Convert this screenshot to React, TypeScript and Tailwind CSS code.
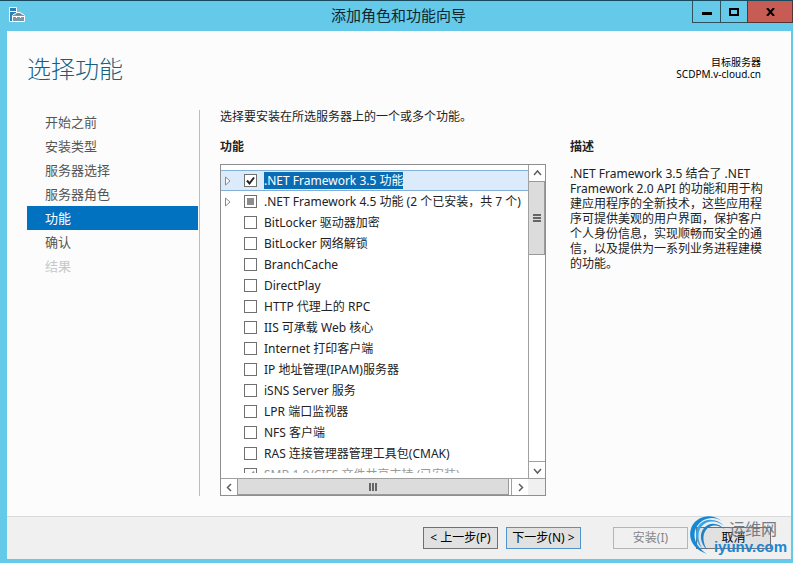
import { useState } from "react";
import clsx from "clsx";

const steps = [
  { label: "开始之前" },
  { label: "安装类型" },
  { label: "服务器选择" },
  { label: "服务器角色" },
  { label: "功能", current: true },
  { label: "确认" },
  { label: "结果", disabled: true },
];

type Feature = {
  name: string;
  expandable?: boolean;
  selected?: boolean;
  partial?: boolean;
  disabled?: boolean;
};

const features: Feature[] = [
  { name: ".NET Framework 3.5 功能", expandable: true, selected: true },
  { name: ".NET Framework 4.5 功能 (2 个已安装，共 7 个)", expandable: true, partial: true },
  { name: "BitLocker 驱动器加密" },
  { name: "BitLocker 网络解锁" },
  { name: "BranchCache" },
  { name: "DirectPlay" },
  { name: "HTTP 代理上的 RPC" },
  { name: "IIS 可承载 Web 核心" },
  { name: "Internet 打印客户端" },
  { name: "IP 地址管理(IPAM)服务器" },
  { name: "iSNS Server 服务" },
  { name: "LPR 端口监视器" },
  { name: "NFS 客户端" },
  { name: "RAS 连接管理器管理工具包(CMAK)" },
  { name: "SMB 1.0/CIFS 文件共享支持 (已安装)", disabled: true },
];

const TitleBar = () => {
  return (
    <header className="grid grid-cols-[1fr_auto_1fr] h-[31px] pl-2 border-t border-[#174a5c]">
      {/* server with toolbox */}
      <svg className="mt-[5px]" width="18" height="18" viewBox="0 0 18 18">
        <path d="M1.500 1.500h7v14h-7z" fill="#2c7fb5" stroke="#fff" />
        <path d="M2 5.500h6" stroke="#fff" />
        <path d="M4.500 9.500l1.500-1.500h1.500l1-1.500h4l1 1.500h1.500l1.500 1.500v6h-12z" fill="#7b98a8" stroke="#fff" />
        <path d="M8.500 9V8.500h4V9" fill="none" stroke="#5f7f90" />
        <path d="M5 10.500h11M8.500 10v2M12.500 10v2" stroke="#fff" />
      </svg>
      <h1 className="-ml-1 pt-0.5 text-[15px] leading-6 text-[#10262f]">添加角色和功能向导</h1>
      <div className="flex justify-end h-[22px]">
        <button aria-label="最小化" className="w-[29px] border border-t-0 border-[#30505e] flex items-center justify-center">
          <span className="w-2.5 h-[3px] mt-1 bg-black" />
        </button>
        <button aria-label="最大化" className="w-[26px] border-b border-[#30505e] flex items-center justify-center">
          <span className="w-2.5 h-2 border-2 border-black" />
        </button>
        <button aria-label="关闭" className="w-[46px] border border-t-0 border-[#5a3434] bg-[#c75c54] flex items-center justify-center">
          <svg width="9" height="8" viewBox="0 0 9 8">
            <path d="M1 0l7 8M8 0L1 8" stroke="#000" strokeWidth="2" />
          </svg>
        </button>
      </div>
    </header>
  );
};

const Sidebar = () => {
  return (
    <nav className="w-[173px] shrink-0 pr-px border-r border-[#bcbcbc]">
      {steps.map((step) => (
        <button
          key={step.label}
          disabled={step.disabled}
          className={clsx(
            "block w-full h-6 pl-[18px] text-left text-[13px] leading-6",
            step.current && "bg-[#0072c0] text-white",
            step.disabled && "text-[#c8c8c8]",
            !step.current && !step.disabled && "text-[#555]"
          )}
        >
          {step.label}
        </button>
      ))}
    </nav>
  );
};

const FeatureRow = ({ feature, id }: { feature: Feature; id: string }) => {
  const [checked, setChecked] = useState(!!feature.selected || !!feature.disabled);
  return (
    <li
      className={clsx(
        "flex items-center h-[21px] pl-1 border-y",
        feature.selected ? "bg-[#dcebfc] border-[#84b0d8]" : "border-transparent",
        feature.disabled ? "text-[#999]" : "text-[#222]"
      )}
    >
      <span className="w-[19px] shrink-0">
        {feature.expandable && (
          <button aria-label="展开" className="block">
            <svg width="6" height="10" viewBox="0 0 6 10">
              <path d="M.5 1v8l4.500-4z" fill="#fff" stroke="#8a8a8a" />
            </svg>
          </button>
        )}
      </span>
      <span className="relative w-[13px] h-[13px] shrink-0">
        <input
          id={id}
          type="checkbox"
          checked={checked}
          disabled={feature.disabled}
          onChange={() => setChecked(!checked)}
          className="block appearance-none w-[13px] h-[13px] bg-white border border-[#707070]"
        />
        {checked && (
          <svg className="absolute inset-0 pointer-events-none" width="13" height="13" viewBox="0 0 13 13">
            <path d="M3 6.500l2.500 3L10 3.500" fill="none" stroke="currentColor" strokeWidth="2" />
          </svg>
        )}
        {feature.partial && !checked && (
          <span className="absolute inset-[3px] bg-[#8c8c8c] pointer-events-none" />
        )}
      </span>
      <label
        htmlFor={id}
        className={clsx("ml-[7px] leading-[17px] whitespace-nowrap", feature.selected && "bg-[#0a6cb4] text-white")}
      >
        {feature.name}
      </label>
    </li>
  );
};

const arrows = {
  up: "M1 6l3.500-4L8 6",
  down: "M1 3l3.500 4L8 3",
  left: "M6 1L2.500 4.500L6 8",
  right: "M3 1l3.500 3.500L3 8",
};

const ScrollArrow = ({ dir, label }: { dir: keyof typeof arrows; label: string }) => {
  return (
    <button aria-label={label} className="w-4 h-4 shrink-0 bg-white flex items-center justify-center">
      <svg width="9" height="9" viewBox="0 0 9 9">
        <path d={arrows[dir]} fill="none" stroke="#606060" strokeWidth="1.500" />
      </svg>
    </button>
  );
};

const FeatureList = () => {
  return (
    <div className="flex-1 min-h-0 grid grid-cols-[1fr_17px] grid-rows-[1fr_17px] border border-[#8f8f8f] bg-white">
      <div className="min-h-0 py-[5px] flex">
        <ul className="flex-1 overflow-hidden">
          {features.map((feature, i) => (
            <FeatureRow key={feature.name} feature={feature} id={`feature-${i}`} />
          ))}
        </ul>
      </div>
      {/* vertical scroll bar */}
      <div className="flex flex-col border-l border-[#a0a0a0]">
        <ScrollArrow dir="up" label="向上滚动" />
        <div className="h-[74px] border-y border-r border-[#9a9a9a] bg-[#dcdcdc] flex flex-col items-center justify-center gap-px">
          <span className="w-2 h-0.5 bg-[#666]" />
          <span className="w-2 h-0.5 bg-[#666]" />
          <span className="w-2 h-0.5 bg-[#666]" />
        </div>
        <div className="flex-1 border-b border-[#a0a0a0]" />
        <ScrollArrow dir="down" label="向下滚动" />
      </div>
      {/* horizontal scroll bar */}
      <div className="flex border-t border-[#a0a0a0]">
        <ScrollArrow dir="left" label="向左滚动" />
        <div className="flex-1 border-x border-b border-[#9a9a9a] bg-[#dcdcdc] flex items-center justify-center gap-px">
          <span className="w-0.5 h-2 bg-[#666]" />
          <span className="w-0.5 h-2 bg-[#666]" />
          <span className="w-0.5 h-2 bg-[#666]" />
        </div>
        <div className="w-[3px] border-r border-[#a0a0a0]" />
        <ScrollArrow dir="right" label="向右滚动" />
      </div>
      <div className="border-t border-[#a0a0a0] bg-[#f0f0f0]" />
    </div>
  );
};

const Watermark = () => {
  return (
    <div className="absolute right-1 bottom-1 w-[99px] h-11 pointer-events-none">
      {/* swirl made of thin crescents */}
      <svg className="absolute left-0 top-1" width="42" height="40" viewBox="0 0 42 40">
        <path d="M34 6C24-2 10 0 4 11C-1 22 4 34 19 39C8 32 4 22 8 13C13 3 25 0 34 6z" fill="#1689d6" />
        <path d="M36 11C29 3 17 3 11 10C6 17 7 27 14 33C10 26 9 18 13 12C19 5 28 5 36 11z" fill="#35a5e6" />
        <path d="M37 15C31 7 21 7 16 13C11 19 12 28 19 35C15 28 14 20 18 15C22 9 31 9 37 15z" fill="#1f7fc8" />
      </svg>
      <span className="absolute right-2.5 top-2 text-[16px] leading-5 text-[#737b85]">运维网</span>
      <span className="absolute right-0 bottom-0 font-['Liberation_Sans',sans-serif] text-[15px] leading-4 font-bold text-[#1c86d1]">
        iyunv.com
      </span>
    </div>
  );
};

const Footer = () => {
  return (
    <footer className="relative flex items-center justify-end gap-2 h-[43px] pr-5 border-t border-[#dadada] bg-[#f0f0f0] text-xs text-black">
      <button className="w-[75px] h-[22px] border border-[#707070] bg-[#e1e1e1]">&lt; 上一步(P)</button>
      <button className="w-[75px] h-[22px] border border-[#4f93cf] bg-[#e1e1e1]">下一步(N) &gt;</button>
      <button disabled className="w-[75px] h-[22px] ml-6 border border-[#b5b5b5] bg-[#f0f0f0] text-[#868686]">
        安装(I)
      </button>
      <button className="w-[75px] h-[22px] border border-[#707070] bg-[#e1e1e1]">取消</button>
      <Watermark />
    </footer>
  );
};

export default function App() {
  return (
    <div className="flex flex-col h-screen bg-[#65c9e9] font-['Noto_Sans','Noto_Sans_CJK_SC',sans-serif]">
      <TitleBar />
      <div className="flex-1 min-h-0 flex flex-col ml-[7px] mr-0.5 mb-1 bg-[#fcfcfc]">
        <div className="flex justify-between h-[79px] pl-5 pr-[30px] pt-5">
          <h2 className="text-2xl leading-9 font-light text-[#155f80]">选择功能</h2>
          <div className="pt-[5px] text-right text-[10px] leading-3 text-black">
            <p>目标服务器</p>
            <p>SCDPM.v-cloud.cn</p>
          </div>
        </div>
        <main className="flex-1 min-h-0 flex pl-5 pr-6 pb-5 text-xs">
          <Sidebar />
          <section className="flex-1 min-w-0 ml-5 flex flex-col text-[#222]">
            <p className="leading-[14px]">选择要安装在所选服务器上的一个或多个功能。</p>
            <h3 className="mt-4 mb-2.5 leading-[14px] font-bold">功能</h3>
            <FeatureList />
          </section>
          <section className="w-[197px] shrink-0 ml-6 pt-[30px] text-[#222]">
            <h3 className="leading-[14px] font-bold">描述</h3>
            <p className="mt-3 leading-[15px]">
              .NET Framework 3.5 结合了 .NET Framework 2.0 API 的功能和用于构建应用程序的全新技术，这些应用程序可提供美观的用户界面，保护客户个人身份信息，实现顺畅而安全的通信，以及提供为一系列业务进程建模的功能。
            </p>
          </section>
        </main>
        <Footer />
      </div>
    </div>
  );
}
